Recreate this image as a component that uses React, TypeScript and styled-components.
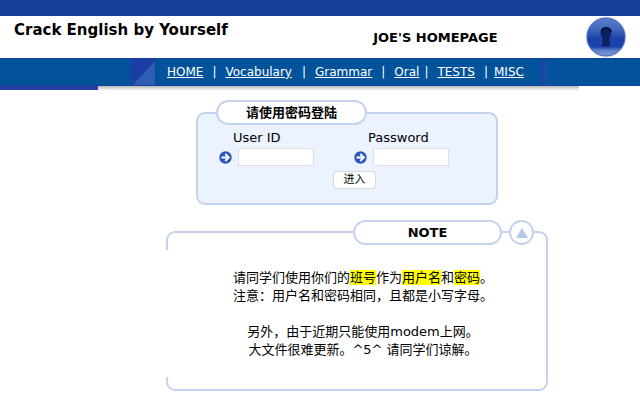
import React from "react";
import styled, { createGlobalStyle } from "styled-components";

const GlobalStyle = createGlobalStyle`
  * { box-sizing: border-box; }
  body {
    margin: 0;
    background: #fff;
    color: #000;
    font-family: "DejaVu Sans", "Noto Sans CJK SC", sans-serif;
    font-size: 13px;
    line-height: 18px;
  }
`;

const TopBar = styled.div`
  height: 16px;
  background: #14409b;
`;

const Header = styled.header`
  display: flex;
  height: 42px;
  padding: 0 13px 0 14px;
`;

const SiteTitle = styled.h1`
  flex: 0 0 auto;
  margin: 4px 0 0;
  font-size: 15px;
  line-height: 20px;
`;

const Owner = styled.h2`
  flex: 1;
  margin: 12px 0 0 58px;
  text-align: center;
  font-size: 13px;
  line-height: 20px;
`;

const NavBar = styled.nav`
  display: flex;
  height: 28px;
  padding-left: 131px;
  background: #02539b;
  border-top: 1px solid #164494;
  border-bottom: 1px solid #12459a;
`;

const NavLinks = styled.div`
  display: flex;
  align-items: center;
  width: 384px;
  padding-left: 12px;
  color: #fff;
  font-size: 12px;
  white-space: pre;
`;

const NavLink = styled.a`
  color: #fff;
  text-decoration: underline;
`;

const Divider = styled.span<{ $before: number; $after: number }>`
  margin: 0 ${(p) => p.$after}px 0 ${(p) => p.$before}px;
`;

const Stripe = styled.div`
  width: 10px;
  background: linear-gradient(90deg, #02539b, #1f3fa6 40%, #1d4ba6 60%, #02539b);
`;

const Underline = styled.div`
  display: flex;
  height: 5px;
  margin-right: 61px;
`;

const UnderlineAccent = styled.div`
  width: 98px;
  height: 4px;
  background: #2440a4;
`;

const UnderlineShade = styled.div`
  flex: 1;
  background: linear-gradient(#b4b6b6, #e6e6e6 60%, #fff);
`;

const Main = styled.main`
  display: flex;
  flex-direction: column;
  align-items: center;
  padding: 21px 0 23px 54px;
`;

const LoginPanel = styled.form`
  width: 302px;
  height: 93px;
  border: 2px solid #c5d2ee;
  border-radius: 9px;
  background: #ecf2fe;
`;

const Pill = styled.h3`
  width: 151px;
  height: 25px;
  margin: 0;
  border: 2px solid #c5d2ee;
  border-radius: 13px;
  background: #fff;
  text-align: center;
  font-size: 13px;
  line-height: 21px;
`;

const LoginHeading = styled.div`
  margin: -14px 0 0 18px;
`;

const Fields = styled.div`
  display: grid;
  grid-template-columns: 1fr 1fr;
  margin: 4px 7px 0 21px;
`;

const FieldLabel = styled.label`
  display: block;
  padding-left: 14px;
`;

const FieldRow = styled.div`
  display: flex;
  align-items: center;
  gap: 6px;
  margin-top: 1px;
`;

const TextBox = styled.input`
  width: 76px;
  height: 18px;
  padding: 0 3px;
  border: 1px solid #dce0e8;
  background: #fff;
  font: inherit;
  font-size: 11px;
`;

const Submit = styled.button`
  display: block;
  width: 43px;
  height: 18px;
  margin: 5px 0 0 135px;
  padding: 0;
  border: 1px solid #d4d8e2;
  border-radius: 4px;
  background: #fff;
  color: #000;
  font-family: inherit;
  font-size: 11px;
  line-height: 16px;
`;

const NotePanel = styled.section`
  position: relative;
  width: 382px;
  margin: 26px 0 0 20px;
  padding-bottom: 30px;
  border: 2px solid #c5d2ee;
  border-radius: 9px;

  &::before {
    content: "";
    position: absolute;
    top: 17px;
    bottom: 12px;
    left: -2px;
    width: 2px;
    background: #fff;
  }
`;

const NoteHeading = styled.div`
  display: flex;
  justify-content: flex-end;
  gap: 7px;
  margin: -13px 12px 0 0;

  ${Pill} {
    width: 149px;
  }
`;

const TopLink = styled.a`
  display: flex;
  align-items: center;
  justify-content: center;
  width: 25px;
  height: 25px;
  border: 2px solid #c5d2ee;
  border-radius: 50%;
  background: #fff;
`;

const NoteText = styled.p`
  margin: 24px 0 0;
  padding-left: 12px;
  text-align: center;
`;

const Highlight = styled.mark`
  background: #ffff00;
  color: #000;
`;

const LockLogo = () => (
  <svg width="42" height="42" viewBox="0 0 42 42" aria-hidden="true">
    <defs>
      <linearGradient id="orb" x1="0" y1="0" x2="0" y2="1">
        <stop offset="0" stopColor="#5c80cb" />
        <stop offset="0.3" stopColor="#3f68bb" />
        <stop offset="0.55" stopColor="#1b40aa" />
        <stop offset="0.76" stopColor="#1c43ae" />
        <stop offset="0.86" stopColor="#6384cb" />
        <stop offset="1" stopColor="#7e99d6" />
      </linearGradient>
    </defs>
    <circle cx="21" cy="21" r="20.5" fill="#dfe5f6" />
    <circle cx="21" cy="21" r="19" fill="url(#orb)" stroke="#3d60b6" />
    <path d="M21 11.500a5.500 5.500 0 0 0-3.500 9.700L17 30.500h8l-0.700-9.300A5.500 5.500 0 0 0 21 11.500z" fill="#0b2161" />
    <path d="M16.500 16a4.800 4.800 0 0 1 9.500 0" fill="none" stroke="#07153d" strokeWidth="2" />
  </svg>
);

const NavCorner = () => (
  <svg width="24" height="26" viewBox="0 0 24 26" aria-hidden="true">
    <rect width="24" height="26" fill="#1b3ea4" />
    <path d="M24 2V26H2z" fill="#2e5db4" />
  </svg>
);

const ArrowIcon = () => (
  <svg width="13" height="13" viewBox="0 0 13 13" aria-hidden="true">
    <circle cx="6.500" cy="6.500" r="6.200" fill="#2c56bd" />
    <path d="M2.500 6.500h7M6.300 3l3.500 3.500L6.300 10" fill="none" stroke="#fff" strokeWidth="2" />
  </svg>
);

const UpIcon = () => (
  <svg width="12" height="10" viewBox="0 0 12 10" aria-hidden="true">
    <path d="M6 0l6 10H0z" fill="#b4c9ef" />
  </svg>
);

const Field = ({ id, label, type }: { id: string; label: string; type: string }) => (
  <div>
    <FieldLabel htmlFor={id}>{label}</FieldLabel>
    <FieldRow>
      <ArrowIcon />
      <TextBox id={id} name={id} type={type} />
    </FieldRow>
  </div>
);

const links = [
  { label: "HOME", before: 0, after: 0 },
  { label: "Vocabulary", before: 9, after: 9 },
  { label: "Grammar", before: 10, after: 9 },
  { label: "Oral", before: 9, after: 9 },
  { label: "TESTS", before: 5, after: 9 },
  { label: "MISC", before: 9, after: 6 },
];

export default function App() {
  return (
    <>
      <GlobalStyle />
      <TopBar />
      <Header>
        <SiteTitle>Crack English by Yourself</SiteTitle>
        <Owner>JOE'S HOMEPAGE</Owner>
        <LockLogo />
      </Header>
      <NavBar>
        <NavCorner />
        <NavLinks>
          {links.map((link, i) => (
            <React.Fragment key={link.label}>
              {i > 0 && <Divider $before={link.before} $after={link.after}>|</Divider>}
              <NavLink href="#">{link.label}</NavLink>
            </React.Fragment>
          ))}
        </NavLinks>
        <Stripe />
      </NavBar>
      <Underline>
        <UnderlineAccent />
        <UnderlineShade />
      </Underline>
      <Main>
        <LoginPanel onSubmit={(e) => e.preventDefault()}>
          <LoginHeading>
            <Pill>请使用密码登陆</Pill>
          </LoginHeading>
          <Fields>
            <Field id="userid" label="User ID" type="text" />
            <Field id="password" label="Password" type="password" />
          </Fields>
          <Submit type="submit">进入</Submit>
        </LoginPanel>
        <NotePanel>
          <NoteHeading>
            <Pill>NOTE</Pill>
            <TopLink href="#" aria-label="Back to top">
              <UpIcon />
            </TopLink>
          </NoteHeading>
          <NoteText>
            请同学们使用你们的<Highlight>班号</Highlight>作为<Highlight>用户名</Highlight>和<Highlight>密码</Highlight>。
            <br />
            注意：用户名和密码相同，且都是小写字母。
            <br />
            <br />
            另外，由于近期只能使用modem上网。
            <br />
            大文件很难更新。^5^ 请同学们谅解。
          </NoteText>
        </NotePanel>
      </Main>
    </>
  );
}
